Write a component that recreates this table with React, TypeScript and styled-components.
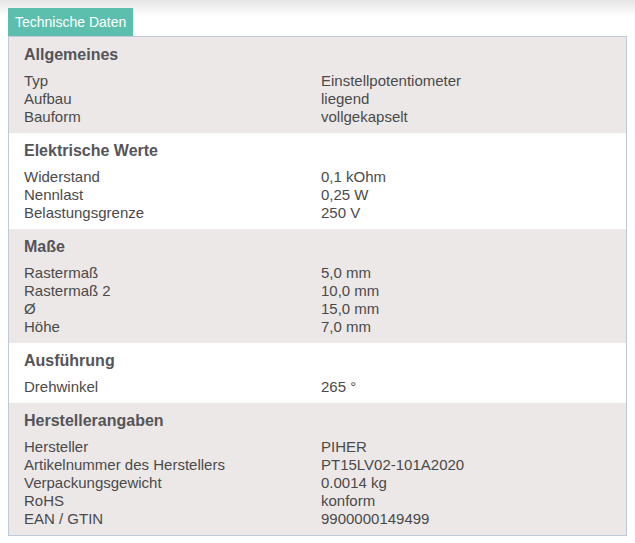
import React from 'react';
import styled, { createGlobalStyle } from 'styled-components';

const GlobalStyle = createGlobalStyle`
	body {
		margin: 0;
		background: #fff;
		font-family: "Liberation Sans", Arial, sans-serif;
	}
`;

interface Section {
	title: string;
	rows: [string, string][];
}

const sections: Section[] = [
	{
		title: 'Allgemeines',
		rows: [
			['Typ', 'Einstellpotentiometer'],
			['Aufbau', 'liegend'],
			['Bauform', 'vollgekapselt'],
		],
	},
	{
		title: 'Elektrische Werte',
		rows: [
			['Widerstand', '0,1 kOhm'],
			['Nennlast', '0,25 W'],
			['Belastungsgrenze', '250 V'],
		],
	},
	{
		title: 'Maße',
		rows: [
			['Rastermaß', '5,0 mm'],
			['Rastermaß 2', '10,0 mm'],
			['Ø', '15,0 mm'],
			['Höhe', '7,0 mm'],
		],
	},
	{
		title: 'Ausführung',
		rows: [['Drehwinkel', '265 °']],
	},
	{
		title: 'Herstellerangaben',
		rows: [
			['Hersteller', 'PIHER'],
			['Artikelnummer des Herstellers', 'PT15LV02-101A2020'],
			['Verpackungsgewicht', '0.0014 kg'],
			['RoHS', 'konform'],
			['EAN / GTIN', '9900000149499'],
		],
	},
];

export default function App() {
	return (
		<>
			<GlobalStyle />
			<Page>
				<TopShade />
				<Wrapper>
					<Tab>Technische Daten</Tab>
					<Panel>
						{sections.map((s, i) => (
							<Block key={s.title} $shaded={i % 2 === 0}>
								<Heading>{s.title}</Heading>
								<Rows>
									{s.rows.map(([label, value]) => (
										<Row key={label}>
											<Label>{label}</Label>
											<Value>{value}</Value>
										</Row>
									))}
								</Rows>
							</Block>
						))}
					</Panel>
				</Wrapper>
			</Page>
		</>
	);
}

const Page = styled.div`
	position: relative;
	width: 635px;
	height: 543px;
	overflow: hidden;
`;

const TopShade = styled.div`
	position: absolute;
	top: 0;
	left: 0;
	right: 0;
	height: 16px;
	background: linear-gradient(#e4e4e4, rgba(255, 255, 255, 0));
`;

const Wrapper = styled.div`
	position: relative;
	padding: 8px 8px 0 8px;
	display: flex;
	flex-direction: column;
	align-items: flex-start;
`;

const Tab = styled.div`
	background: #5cbfad;
	color: #fff;
	font-size: 14px;
	line-height: 28px;
	height: 28px;
	padding: 0 7px;
	width: 125px;
	box-sizing: border-box;
	white-space: nowrap;
`;

const Panel = styled.div`
	width: 619px;
	box-sizing: border-box;
	border: 1px solid #bccadb;
`;

const Block = styled.div<{ $shaded: boolean }>`
	background: ${p => (p.$shaded ? '#ece8e7' : '#fff')};
	padding: 8px 15px 7px 15px;
`;

const Heading = styled.div`
	font-size: 16px;
	font-weight: bold;
	color: #555459;
	line-height: 19px;
	margin-bottom: 8px;
`;

const Rows = styled.div`
	display: flex;
	flex-direction: column;
`;

const Row = styled.div`
	display: grid;
	grid-template-columns: 297px 1fr;
	font-size: 15px;
	line-height: 18px;
	color: #4a4a4a;
`;

const Label = styled.span``;

const Value = styled.span``;
